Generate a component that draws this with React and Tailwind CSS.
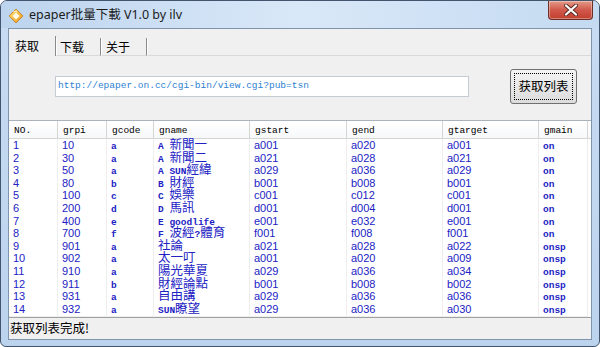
import React from "react";

const MONO = "font-['Liberation_Mono','Noto_Sans_CJK_SC',monospace]";

const rows = [
  ["1", "10", "a", "A 新聞一", "a001", "a020", "a001", "on"],
  ["2", "30", "a", "A 新聞二", "a021", "a028", "a021", "on"],
  ["3", "50", "a", "A SUN經緯", "a029", "a036", "a029", "on"],
  ["4", "80", "b", "B 財經", "b001", "b008", "b001", "on"],
  ["5", "100", "c", "C 娛樂", "c001", "c012", "c001", "on"],
  ["6", "200", "d", "D 馬訊", "d001", "d004", "d001", "on"],
  ["7", "400", "e", "E goodlife", "e001", "e032", "e001", "on"],
  ["8", "700", "f", "F 波經?體育", "f001", "f008", "f001", "on"],
  ["9", "901", "a", "社論", "a021", "a028", "a022", "onsp"],
  ["10", "902", "a", "太一叮", "a001", "a020", "a009", "onsp"],
  ["11", "910", "a", "陽光華夏", "a029", "a036", "a034", "onsp"],
  ["12", "911", "b", "財經論點", "b001", "b008", "b002", "onsp"],
  ["13", "931", "a", "自由講", "a029", "a036", "a036", "onsp"],
  ["14", "932", "a", "SUN瞭望", "a029", "a036", "a030", "onsp"],
];

const cols = [
  { name: "NO.", w: "w-[49px]", kind: "num" },
  { name: "grpi", w: "w-[49px]", kind: "num" },
  { name: "gcode", w: "w-[47px]", kind: "mono" },
  { name: "gname", w: "w-[96px]", kind: "mixed" },
  { name: "gstart", w: "w-[97px]", kind: "num" },
  { name: "gend", w: "w-[96px]", kind: "num" },
  { name: "gtarget", w: "w-[96px]", kind: "num" },
  { name: "gmain", w: "w-[49px]", kind: "mono" },
];

function Mixed({ text }) {
  const parts = text.split(/([\u2E80-\u9FFF\uFF00-\uFFEF]+)/).filter(Boolean);
  return parts.map((p, i) =>
    /[\u2E80-\u9FFF\uFF00-\uFFEF]/.test(p) ? (
      <span key={i} className="font-['Noto_Sans_CJK_TC',sans-serif] text-[12.5px]">
        {p}
      </span>
    ) : (
      <span key={i} className={`${MONO} text-[9.5px] font-semibold whitespace-pre`}>
        {p}
      </span>
    )
  );
}

function Cell({ col, value }) {
  let content;
  if (col.kind === "num")
    content = <span className="font-['Liberation_Sans',sans-serif] text-[11px]">{value}</span>;
  else if (col.kind === "mono")
    content = <span className={`${MONO} text-[9.5px] font-semibold`}>{value}</span>;
  else content = <Mixed text={value} />;
  return (
    <div
      className={`${col.w} h-[12.6px] shrink-0 pl-[4px] leading-[12.6px] whitespace-nowrap text-[#2222c4] overflow-visible`}
    >
      {content}
    </div>
  );
}

function AppIcon() {
  return (
    <svg width="16" height="16" viewBox="0 0 16 16">
      <defs>
        <linearGradient id="ig" x1="0" y1="0" x2="1" y2="1">
          <stop offset="0" stopColor="#ffe27a" />
          <stop offset="1" stopColor="#e99a1c" />
        </linearGradient>
      </defs>
      <path d="M8 1 L15 8 L8 15 L1 8 Z" fill="url(#ig)" stroke="#c67a12" strokeWidth="0.8" />
      <path d="M8 4.5 L11.5 8 L8 11.5 L4.5 8 Z" fill="#fffbe6" />
      <path d="M5.5 3.5 L9 3.5" stroke="#fff3c0" strokeWidth="1" />
    </svg>
  );
}

function CloseButton() {
  return (
    <div className="mt-0 mr-[6px] w-[45px] h-[19px] rounded-b-[4px] border border-t-0 border-[#6b2f28] bg-gradient-to-b from-[#e39a8a] via-[#d0584a] to-[#c23e2e] flex items-center justify-center shadow-[inset_0_0_0_1px_rgba(255,255,255,0.35)]">
      <svg width="14" height="12" viewBox="0 0 14 12">
        <path d="M2 1.5 L12 10.5 M12 1.5 L2 10.5" stroke="#5a2a22" strokeWidth="4" strokeLinecap="round" />
        <path d="M2 1.5 L12 10.5 M12 1.5 L2 10.5" stroke="#ffffff" strokeWidth="2.2" strokeLinecap="round" />
      </svg>
    </div>
  );
}

export default function App() {
  return (
    <div className="w-[600px] h-[347px] bg-white">
      <div className="w-[600px] h-[347px] flex flex-col rounded-t-[7px] rounded-b-[6px] border border-[#42556d] bg-gradient-to-b from-[#c8dcf2] to-[#bcd3ee] overflow-hidden">
        {/* Title bar */}
        <div className="h-[27px] shrink-0 flex items-start bg-gradient-to-r from-[#bdd4ee] via-[#d9e8f8] to-[#c4daf1]">
          <div className="ml-[7px] mt-[7px]">
            <AppIcon />
          </div>
          <div className="ml-[5px] mt-[6px] text-[12.5px] leading-[16px] text-[#1b1b1b] font-['Noto_Sans','Noto_Sans_CJK_SC',sans-serif]">
            epaper批量下載 V1.0 by ilv
          </div>
          <div className="flex-1" />
          <CloseButton />
        </div>

        {/* Client area */}
        <div className="mx-[7px] h-[312px] shrink-0 border border-[#8194ad] bg-[#f0f0f0] flex flex-col">
          {/* Tab strip */}
          <div className="h-[27px] shrink-0 flex items-end font-['Noto_Sans_CJK_SC',sans-serif] text-[12px] text-black">
            <div className="w-[47px] h-[20px] pl-[6px] flex items-center border-r border-[#8a8a8a]">
              获取
            </div>
            <div className="w-[45px] h-[18px] pl-[3px] flex items-center border-l border-r border-l-white border-r-[#8a8a8a] border-b border-b-[#d9d9d9]">
              下载
            </div>
            <div className="w-[46px] h-[18px] pl-[4px] flex items-center border-l border-r border-l-white border-r-[#8a8a8a] border-b border-b-[#d9d9d9]">
              关于
            </div>
            <div className="flex-1 h-[18px] border-l border-l-white border-b border-b-[#d9d9d9]" />
          </div>

          {/* Tab panel */}
          <div className="h-[64px] shrink-0 flex items-start">
            <div className="ml-[46px] mt-[20px] w-[414px] h-[21px] bg-white border border-[#c5cbd4] flex items-center pl-[2px] overflow-hidden">
              <span className={`${MONO} text-[9.5px] text-[#2e7fd2] whitespace-nowrap`}>
                http://epaper.on.cc/cgi-bin/view.cgi?pub=tsn
              </span>
            </div>
            <div className="ml-[41px] mt-[13px] w-[67px] h-[35px] rounded-[3px] border border-[#707070] bg-gradient-to-b from-[#f4f4f4] to-[#dcdcdc] p-[3px]">
              <div className="w-full h-full border border-dotted border-black flex items-center justify-center font-['Noto_Sans_CJK_SC',sans-serif] text-[12.5px] text-black">
                获取列表
              </div>
            </div>
          </div>

          {/* List view */}
          <div className="h-[197px] shrink-0 border-t border-[#a9b2bd] bg-white flex flex-col">
            <div className="h-[18px] shrink-0 flex border-b border-[#d5d5d5] bg-gradient-to-b from-white to-[#f7f8fa]">
              {cols.map((c) => (
                <div
                  key={c.name}
                  className={`${c.w} shrink-0 h-full border-r border-[#d5d5d5] pl-[5px] pt-[3px] flex items-center ${MONO} text-[9.5px] text-black`}
                >
                  {c.name}
                </div>
              ))}
              <div className="flex-1 h-full" />
            </div>
            <div className="flex-1 relative flex flex-col">
              <div className="absolute inset-0 flex pointer-events-none">
                {cols.map((c) => (
                  <div key={c.name} className={`${c.w} shrink-0 h-[177px] border-r border-[#eeeeee]`} />
                ))}
              </div>
              <div className="relative flex flex-col -mt-[2px]">
                {rows.map((r, i) => (
                  <div key={i} className="flex">
                    {cols.map((c, j) => (
                      <Cell key={j} col={c} value={r[j]} />
                    ))}
                  </div>
                ))}
              </div>
              <div className="relative w-[579px] h-[1px] mt-[2.6px] bg-[#eeeeee]" />
            </div>
          </div>

          {/* Status bar */}
          <div className="h-[22px] shrink-0 border-t border-[#a0a0a0] flex items-center pl-[1px] font-['Noto_Sans_CJK_SC',sans-serif] text-[12.5px] text-black">
            获取列表完成!
          </div>
        </div>
      </div>
    </div>
  );
}
